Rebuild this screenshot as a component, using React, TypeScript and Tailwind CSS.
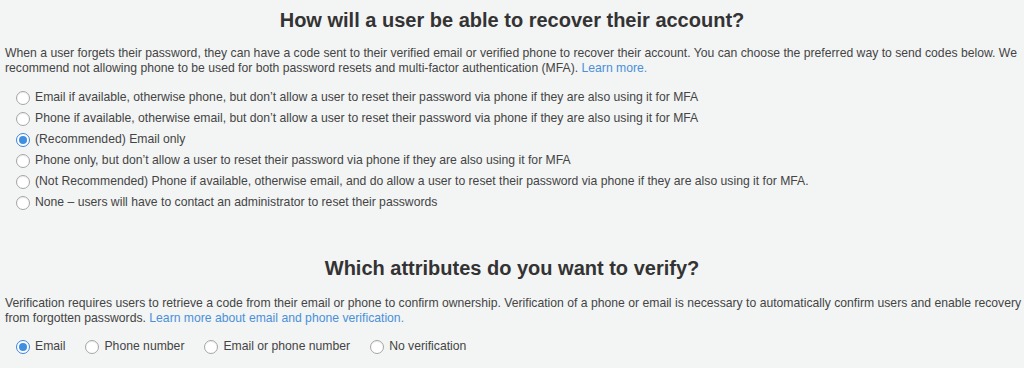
import { useState } from "react"

const recoveryOptions = [
  "Email if available, otherwise phone, but don’t allow a user to reset their password via phone if they are also using it for MFA",
  "Phone if available, otherwise email, but don’t allow a user to reset their password via phone if they are also using it for MFA",
  "(Recommended) Email only",
  "Phone only, but don’t allow a user to reset their password via phone if they are also using it for MFA",
  "(Not Recommended) Phone if available, otherwise email, and do allow a user to reset their password via phone if they are also using it for MFA.",
  "None – users will have to contact an administrator to reset their passwords",
]

const verifyOptions = ["Email", "Phone number", "Email or phone number", "No verification"]

function Radio({ checked }: { checked: boolean }) {
  return (
    <span
      className={
        checked
          ? "flex h-[14px] w-[14px] shrink-0 items-center justify-center rounded-full border border-[#3b82d6] bg-white"
          : "flex h-[14px] w-[14px] shrink-0 items-center justify-center rounded-full border border-[#a6a6a6] bg-white shadow-[inset_0_1px_1px_rgba(0,0,0,0.08)]"
      }
    >
      {checked && <span className="h-[8px] w-[8px] rounded-full bg-[#3f8ee0]" />}
    </span>
  )
}

export default function App() {
  const [recovery, setRecovery] = useState(2)
  const [verify, setVerify] = useState(0)

  return (
    <div className="min-h-[368px] w-full bg-[#f3f4f4] px-[5px] pt-[7px] font-['Liberation_Sans',Arial,sans-serif] text-[12.2px] leading-[15px] text-[#444]">
      <h1 className="text-center text-[20px] font-bold leading-[26px] text-[#333]">
        How will a user be able to recover their account?
      </h1>
      <p className="mt-[13px]">
        When a user forgets their password, they can have a code sent to their verified email or verified phone to recover their account. You can choose the preferred way to send codes below. We recommend not allowing phone to be used for both password resets and multi-factor authentication (MFA).{" "}
        <a className="text-[#4a90d9]">Learn more.</a>
      </p>
      <div className="mt-[11px] flex flex-col pl-[11px]">
        {recoveryOptions.map((opt, i) => (
          <label
            key={i}
            onClick={() => setRecovery(i)}
            className="flex h-[21px] cursor-pointer items-center gap-[5px]"
          >
            <Radio checked={recovery === i} />
            <span>{opt}</span>
          </label>
        ))}
      </div>

      <h1 className="mt-[42px] text-center text-[20px] font-bold leading-[26px] text-[#333]">
        Which attributes do you want to verify?
      </h1>
      <p className="-mr-[4px] mt-[15px]">
        Verification requires users to retrieve a code from their email or phone to confirm ownership. Verification of a phone or email is necessary to automatically confirm users and enable recovery
        <br />
        from forgotten passwords.{" "}
        <a className="text-[#4a90d9]">Learn more about email and phone verification.</a>
      </p>
      <div className="mt-[10px] flex items-center gap-[20px] pl-[11px]">
        {verifyOptions.map((opt, i) => (
          <label
            key={i}
            onClick={() => setVerify(i)}
            className="flex h-[21px] cursor-pointer items-center gap-[5px]"
          >
            <Radio checked={verify === i} />
            <span>{opt}</span>
          </label>
        ))}
      </div>
    </div>
  )
}
